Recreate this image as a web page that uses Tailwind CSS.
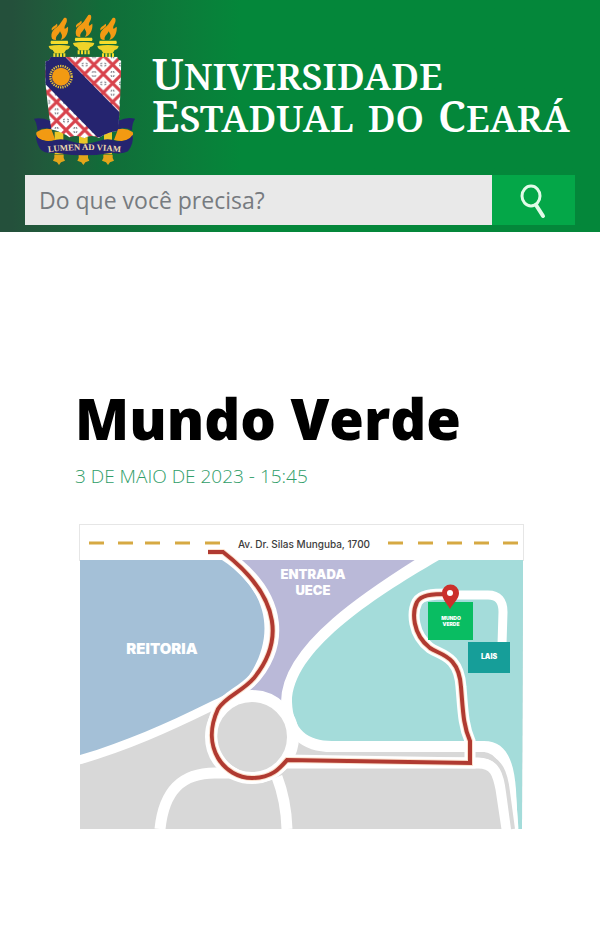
<!DOCTYPE html>
<html lang="pt-BR">
<head>
  <meta charset="UTF-8">
  <meta name="viewport" content="width=device-width, initial-scale=1.0">
  <title>Mundo Verde - Universidade Estadual do Ceará</title>
  <script src="https://cdn.jsdelivr.net/npm/@tailwindcss/browser@4"></script>
</head>
<body class="bg-white font-['Open_Sans',sans-serif]">

  <!-- Header -->
  <header class="bg-linear-90 from-[#24503b] from-2% via-[#116c39] via-17% to-[#04873a] to-40% pb-[7px]">
    <a href="#" class="flex items-center gap-0.5 pl-5">
      <svg class="w-[130px] h-[175px] shrink-0" viewBox="0 0 390 525" role="img" aria-label="Brasão da UECE">
        <defs>
          <pattern id="lattice" width="56" height="56" patternUnits="userSpaceOnUse" patternTransform="translate(138 166)">
            <rect width="56" height="56" fill="#fff" />
            <path d="M-6 -6L62 62M62 -6L-6 62" stroke="#d8424c" stroke-width="9" />
            <path d="M23 4l3 4M33 4l-3 4M23 52l3-4M33 52l-3-4M4 23l4 3M4 33l4-3M52 23l-4 3M52 33l-4-3" stroke="#4a4a58" stroke-width="3" />
          </pattern>
          <clipPath id="shield">
            <path d="M92 170H292Q294 180 304 182Q302 290 295 392Q260 396 236 414Q215 402 192 415Q172 402 148 412Q125 395 92 388L76 250V184Q90 182 92 170Z" />
          </clipPath>
          <g id="torch">
            <path d="M-22 116C-28 96 -16 88 -6 80C4 72 6 64 14 54C22 50 24 58 22 66C18 76 14 80 16 86C20 86 22 82 26 80C28 96 20 116 4 120C12 108 6 102 2 94C-2 104 -12 108 -10 120Q-18 120 -22 116Z" fill="#f39a13" />
            <path d="M-22 92C-26 84 -18 80 -12 76C-8 72 -8 68 -6 74C-4 82 -16 84 -22 92Z" fill="#f39a13" />
            <path d="M-25 122H25Q28 128 25 132H-25Q-28 128-25 122Z" fill="#f5dd2c" />
            <path d="M-32 138Q0 132 32 138Q30 148 20 150L14 160H-14L-20 150Q-30 148-32 138Z" fill="#eed329" />
            <path d="M-15 160V172M-5 160V172M5 160V172M15 160V172" stroke="#f5dd2c" stroke-width="6" />
          </g>
        </defs>
        <use href="#torch" x="118" />
        <use href="#torch" x="191" y="-9" />
        <use href="#torch" x="264" />

        <!-- torch feet -->
        <g fill="#e3a51a">
          <path d="M104 395h26v68h-26ZM177 405h26v58h-26ZM252 395h24v68h-24Z" fill="#eac727" />
          <path d="M103 464h28v10l4 8l-12 5l-6 8l-6-8l-12-5l4-8ZM176 464h28v10l4 8l-12 5l-6 8l-6-8l-12-5l4-8ZM250 464h28v10l4 8l-12 5l-6 8l-6-8l-12-5l4-8Z" />
        </g>

        <g clip-path="url(#shield)">
          <rect x="70" y="165" width="240" height="255" fill="url(#lattice)" />
          <path d="M70 165H130L300 338V392L250 412H232L70 246Z" fill="#25246f" />
        </g>
        <circle cx="123" cy="230" r="32" fill="none" stroke="#e6c33a" stroke-width="7" stroke-dasharray="4 3" />
        <circle cx="123" cy="230" r="27" fill="#f29a12" />

        <!-- ribbon -->
        <path d="M42 356Q66 352 90 362L94 388Q70 380 52 392Q52 372 42 356ZM345 356Q320 350 296 362L294 388Q320 380 336 392Q336 370 345 356Z" fill="#25246f" />
        <path d="M50 396Q72 382 94 388L106 420Q74 428 54 414Q46 402 50 396ZM338 396Q316 382 294 388L282 420Q314 428 334 414Q342 402 338 396Z" fill="#f29a12" />
        <path d="M48 406Q58 424 94 424Q122 412 152 424Q192 438 234 424Q264 412 290 424Q326 424 338 404Q342 430 324 454Q306 464 276 458Q192 474 108 458Q72 462 60 446Q48 428 48 406Z" fill="#25246f" />
        <path id="motto" d="M84 457Q192 443 302 457" fill="none" />
        <text class="font-['Liberation_Serif',serif] font-bold" font-size="26" fill="#f0dcae" text-anchor="middle"><textPath href="#motto" startOffset="50%">LUMEN AD VIAM</textPath></text>
      </svg>
      <span class="flex flex-col pt-4 font-['Noto_Serif','Liberation_Serif',serif] text-[37px] leading-10 font-semibold text-white whitespace-nowrap">
        <span><span class="text-[43px]">U</span>NIVERSIDADE</span>
        <span class="flex items-baseline gap-3.5">
          <span><span class="text-[43px]">E</span>STADUAL</span>
          <span>DO</span>
          <span><span class="text-[43px]">C</span>EARÁ</span>
        </span>
      </span>
    </a>
    <form class="flex h-[50px] mx-[25px]">
      <input type="search" aria-label="Buscar" placeholder="Do que você precisa?" class="grow min-w-0 bg-[#e9e9e9] px-3.5 text-[23px] text-gray-700 placeholder:text-[#777b80] outline-none">
      <button type="submit" aria-label="Pesquisar" class="w-[83px] shrink-0 bg-[#04a748] flex items-center justify-center">
        <svg class="w-8 h-10" viewBox="0 0 32 40" fill="none" stroke="#e2fbe8" stroke-width="3" stroke-linecap="round">
          <ellipse cx="13" cy="16" rx="9" ry="10" />
          <path d="M18 25L25 36" stroke-width="4" />
        </svg>
      </button>
    </form>
  </header>

  <!-- Content -->
  <main class="px-[75px] pt-[148px] pb-24">
    <h1 class="text-[56px] leading-[76px] font-extrabold text-black">Mundo Verde</h1>
    <p class="mt-1 text-[19px] leading-8 font-light text-[#2f9d68]">3 DE MAIO DE 2023 - 15:45</p>

    <svg class="mt-7 w-full" viewBox="75 520 450 312" role="img" aria-label="Mapa de acesso ao Mundo Verde">
      <defs>
        <clipPath id="area">
          <path d="M80 560H523L522 829H80Z" />
        </clipPath>
      </defs>
      <rect x="79.500" y="524.500" width="444" height="36" fill="#fff" stroke="#e6e6e6" />

      <g clip-path="url(#area)">
        <rect x="80" y="560" width="443" height="269" fill="#d8d8d8" />
        <!-- entrada -->
        <path d="M225 560H430C360 596 305 640 289 690L284 720H250L230 700L275 632Z" fill="#bab9d8" />
        <!-- reitoria -->
        <path d="M222 556C285 600 278 650 248 680C234 694 222 696 208 703C165 724 125 742 80 755V560Z" fill="#a4c0d7" stroke="#fff" stroke-width="18" />
        <path d="M222 560C276 596 272 645 246 680C234 692 222 696 208 703C165 724 125 742 80 755V560Z" fill="#a4c0d7" />
        <!-- gramado -->
        <path d="M442 556C370 600 292 652 292 702C293 730 308 741 332 741H484C506 741 514 760 516 790L518 835H540V550Z" fill="#a4dcda" stroke="#fff" stroke-width="22" />
        <path d="M439 560C370 600 292 652 292 702C293 730 308 741 332 741H484C506 741 514 760 516 790L518 829H522L523 560Z" fill="#a4dcda" />
      </g>

      <!-- streets -->
      <g fill="none" stroke="#fff">
        <circle cx="252" cy="737" r="41" stroke-width="12" fill="#d8d8d8" />
        <path d="M472 747H482C502 748 509 770 511 790L514 829" stroke-width="9" />
        <path d="M285 763H478C495 763 498 774 501 789L507 829" stroke-width="11" />
        <path d="M470 755H480C502 757 506 775 508 792L513 829" stroke="#d8d8d8" stroke-width="4" />
        <path d="M160 829C164 790 182 773 215 773H235" stroke-width="11" />
        <path d="M277 777Q286 800 287 829" stroke-width="11" />
        <path d="M450 595H488Q503 595 503 612L502 645" stroke-width="9" />
        <path d="M223 552C285 600 281 645 254 678C242 692 226 696 218 709C200 748 225 778 252 778C272 778 280 768 287 760L470 763V741C463 725 463 710 461 687C459 655 440 655 430 648C412 634 412 612 417 602C421 595 430 594 450 594" stroke-width="11" />
      </g>

      <!-- route -->
      <path d="M208 552H223C285 600 281 645 254 678C242 692 226 696 218 709C200 748 225 778 252 778C272 778 280 768 287 760L470 763V741C463 725 463 710 461 687C459 655 440 655 430 648C412 634 412 612 417 602C421 595 430 594 450 594" fill="none" stroke="#fbe0cc" stroke-width="6" />
      <path d="M208 552H223C285 600 281 645 254 678C242 692 226 696 218 709C200 748 225 778 252 778C272 778 280 768 287 760L470 763V741C463 725 463 710 461 687C459 655 440 655 430 648C412 634 412 612 417 602C421 595 430 594 450 594" fill="none" stroke="#b03a31" stroke-width="4" />

      <path d="M89 543h15M118 543h15M145 543h15M175 543h15M205 543h15M388 543h15M418 543h15M447 543h15M474 543h15M503 543h15" stroke="#d6a943" stroke-width="3" />

      <rect x="428" y="602" width="45" height="38" fill="#09bd62" />
      <rect x="468" y="642" width="42" height="31" fill="#169e99" />
      <path d="M450 609C446 602 442 599 442 593A8 8 0 0 1 459 593C459 599 454 602 450 609Z" fill="#cb302b" />
      <circle cx="450" cy="593" r="3" fill="#fff" />

      <g fill="#fff" text-anchor="middle" class="font-['Inter',sans-serif] font-black">
        <text x="162" y="654" font-size="15">REITORIA</text>
        <text x="313" y="579" font-size="13">ENTRADA</text>
        <text x="313" y="595" font-size="13">UECE</text>
        <text x="451" y="620" font-size="5">MUNDO</text>
        <text x="451" y="626" font-size="5">VERDE</text>
        <text x="489" y="659" font-size="7">LAIS</text>
      </g>
      <text x="304" y="548" font-size="10" fill="#3c3c3c" text-anchor="middle" class="font-['Inter',sans-serif] font-medium">Av. Dr. Silas Munguba, 1700</text>
    </svg>
  </main>

</body>
</html>
